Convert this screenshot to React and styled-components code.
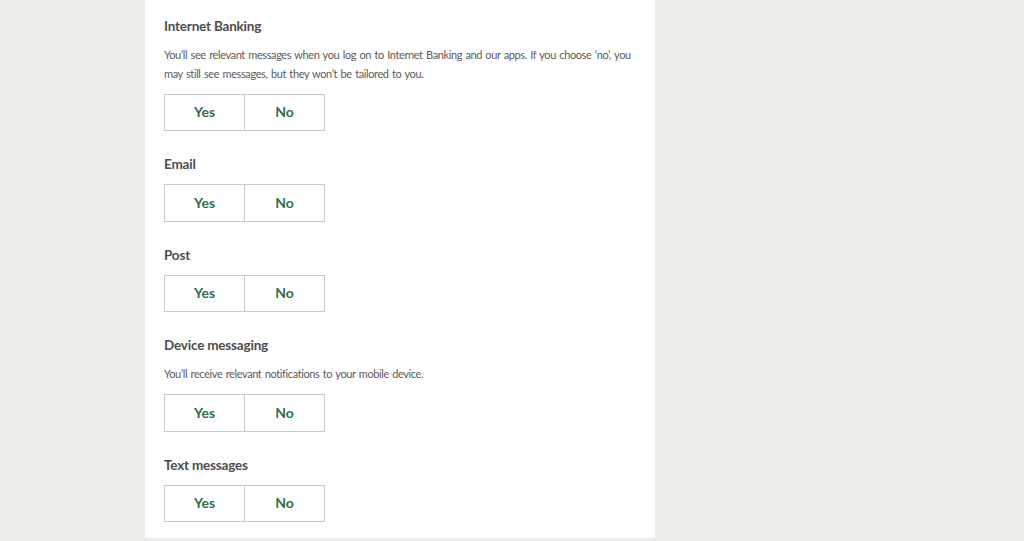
import styled, { createGlobalStyle } from 'styled-components';

const GlobalStyle = createGlobalStyle`
	html, body {
		margin: 0;
		padding: 0;
		background: #edece9;
	}
	body {
		font-family: Lato, "Open Sans", Arial, sans-serif;
	}
`;

const preferences = [
	{
		id: 'internet-banking',
		title: 'Internet Banking',
		description:
			"You’ll see relevant messages when you log on to Internet Banking and our apps. If you choose ‘no’, you may still see messages, but they won’t be tailored to you.",
	},
	{ id: 'email', title: 'Email' },
	{ id: 'post', title: 'Post' },
	{
		id: 'device',
		title: 'Device messaging',
		description: 'You’ll receive relevant notifications to your mobile device.',
	},
	{ id: 'sms', title: 'Text messages' },
];

const Page = styled.div`
	display: flex;
	min-height: 541px;
	padding-left: 145px;
`;

const Card = styled.main`
	width: 510px;
	box-sizing: border-box;
	background: #ffffff;
	padding: 15.75px 19px 15.75px;
	align-self: flex-start;
	display: flex;
	flex-direction: column;
	gap: 23px;
`;

const Section = styled.section`
	display: flex;
	flex-direction: column;
`;

const Title = styled.h3`
	margin: 0 0 10px;
	font-size: 13.5px;
	line-height: 20px;
	font-weight: 700;
	letter-spacing: -0.2px;
	color: #4d4d4d;
`;

const Description = styled.p`
	margin: -1px 0 11px;
	font-size: 11px;
	line-height: 19px;
	color: #5b5b5b;
	letter-spacing: -0.4px;
	word-spacing: 1px;
`;

const Choices = styled.div`
	display: flex;
`;

const Choice = styled.button`
	width: 81px;
	height: 37.5px;
	box-sizing: border-box;
	background: #ffffff;
	border: 1px solid #c9c9c9;
	margin-left: ${({ $first }) => ($first ? '0' : '-1px')};
	font-family: inherit;
	font-size: 14px;
	font-weight: 700;
	color: #2f6d51;
	cursor: pointer;
	padding: 0 0 2px;
`;

const Preference = ({ title, description }) => (
	<Section>
		<Title>{title}</Title>
		{description && <Description>{description}</Description>}
		<Choices>
			<Choice $first>Yes</Choice>
			<Choice>No</Choice>
		</Choices>
	</Section>
);

export default function App() {
	return (
		<>
			<GlobalStyle />
			<Page>
				<Card>
					{preferences.map((p) => (
						<Preference key={p.id} title={p.title} description={p.description} />
					))}
				</Card>
			</Page>
		</>
	);
}
